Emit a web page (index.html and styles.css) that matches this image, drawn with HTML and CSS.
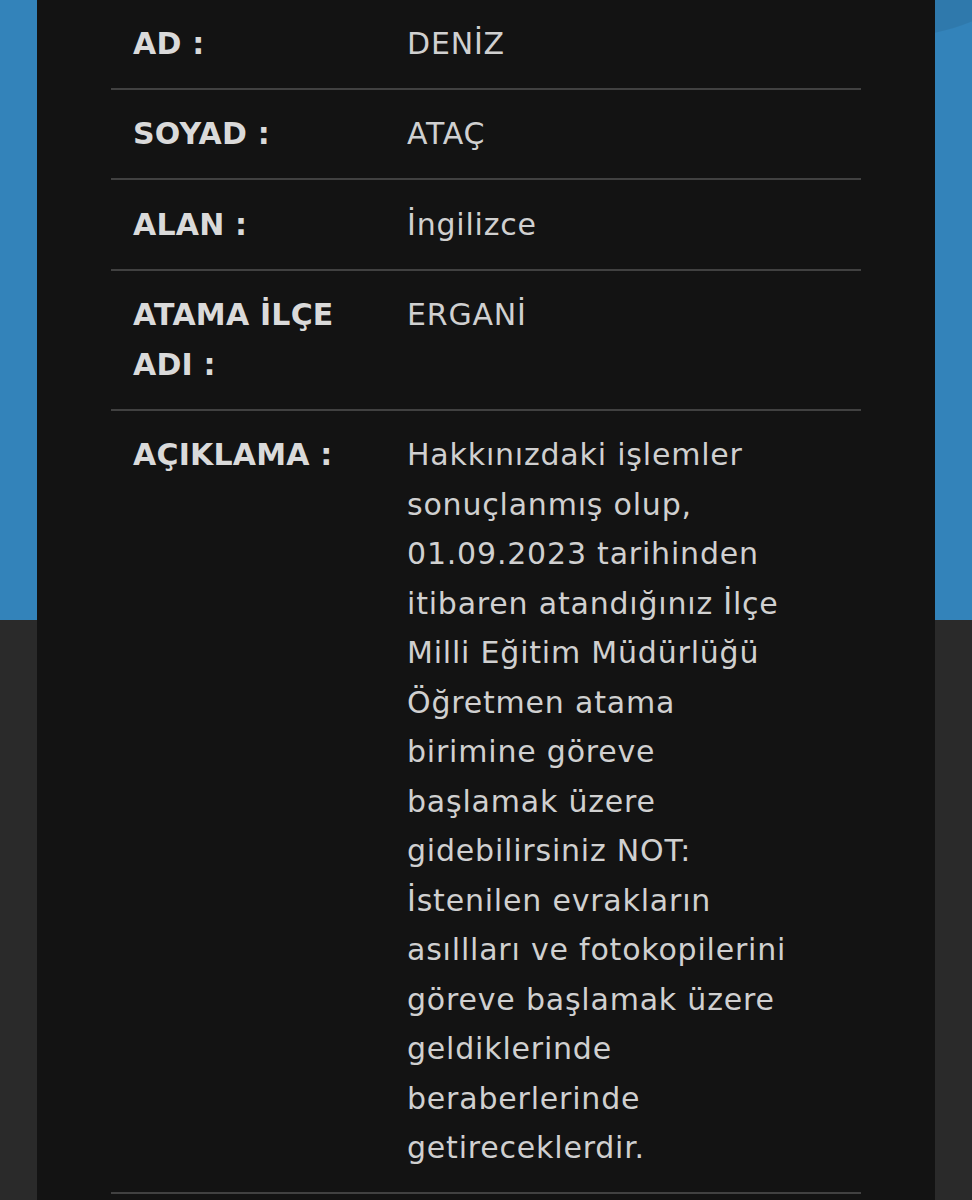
FILE: index.html
```html
<!DOCTYPE html>
<html lang="tr">
<head>
<meta charset="utf-8">
<link rel="stylesheet" href="styles.css">
</head>
<body>
<div class="page">
  <div class="decor"></div>
  <div class="card">
    <div class="table">
      <div class="row">
        <div class="label">AD :</div>
        <div class="value">DENİZ</div>
      </div>
      <div class="row">
        <div class="label">SOYAD :</div>
        <div class="value">ATAÇ</div>
      </div>
      <div class="row">
        <div class="label">ALAN :</div>
        <div class="value">İngilizce</div>
      </div>
      <div class="row">
        <div class="label">ATAMA İLÇE<br>ADI :</div>
        <div class="value">ERGANİ</div>
      </div>
      <div class="row">
        <div class="label">AÇIKLAMA :</div>
        <div class="value">Hakkınızdaki işlemler<br>sonuçlanmış olup,<br>01.09.2023 tarihinden<br>itibaren atandığınız İlçe<br>Milli Eğitim Müdürlüğü<br>Öğretmen atama<br>birimine göreve<br>başlamak üzere<br>gidebilirsiniz NOT:<br>İstenilen evrakların<br>asıllları ve fotokopilerini<br>göreve başlamak üzere<br>geldiklerinde<br>beraberlerinde<br>getireceklerdir.</div>
      </div>
      <div class="row last"></div>
    </div>
  </div>
</div>
</body>
</html>
```

FILE: styles.css
```css
html, body {
  margin: 0;
  padding: 0;
}
body {
  background: linear-gradient(to bottom, #3383ba 0, #3383ba 620px, #2a2a2a 620px, #2a2a2a 100%);
  min-height: 1200px;
  font-family: "DejaVu Sans", "Noto Sans", sans-serif;
  overflow: hidden;
}
.page {
  position: relative;
  height: 1200px;
  overflow: hidden;
}
.decor {
  position: absolute;
  left: 714px;
  top: -336px;
  width: 372px;
  height: 372px;
  border-radius: 50%;
  background: rgba(0, 0, 0, 0.07);
}
.card {
  position: relative;
  margin: 0 37px;
  height: 1300px;
  background: #131313;
  padding: 0 74px;
  margin-top: -1px;
}
.table {
  display: flex;
  flex-direction: column;
}
.row {
  display: grid;
  grid-template-columns: 274px 1fr;
  border-bottom: 2px solid #414141;
}
.row.last {
  border-bottom: none;
  height: 40px;
}
.label, .value {
  padding: 19.5px 22px;
  font-size: 30px;
  line-height: 49.5px;
}
.label {
  font-weight: 700;
  color: #dadada;
  letter-spacing: 0.2px;
}
.value {
  color: #d0d0d0;
  letter-spacing: 0.8px;
}
```
